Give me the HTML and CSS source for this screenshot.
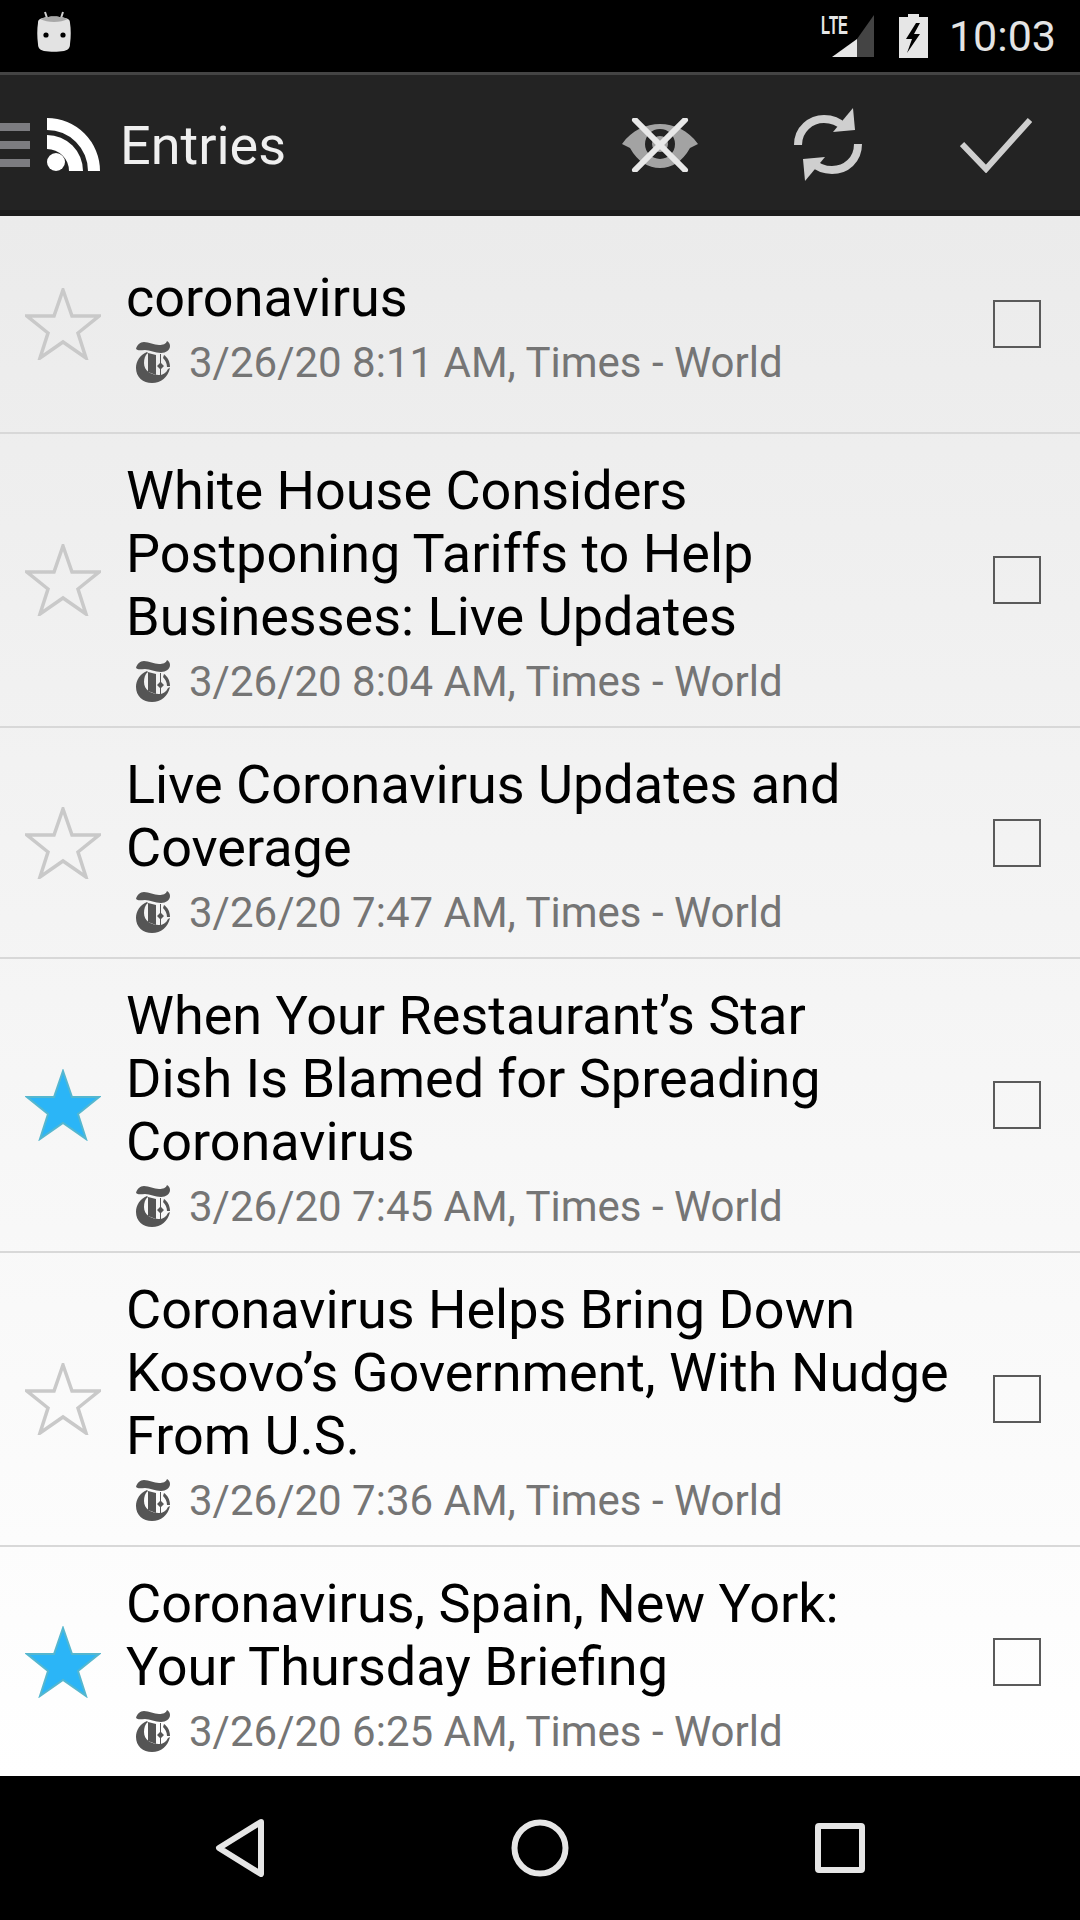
FILE: index.html
```html
<!DOCTYPE html>
<html lang="en">
<head>
    <meta charset="UTF-8">
    <meta name="viewport" content="width=device-width, initial-scale=1.0">
    <link rel="stylesheet" href="styles.css">
    <title>Entries</title>
</head>

<body>
    <svg class="defs" width="0" height="0">
        <symbol id="star" viewBox="0 0 76 72">
            <polygon points="38,2 47,28 74,28 53,45 61,70 38,54 15,70 23,45 2,28 29,28"/>
        </symbol>
        <symbol id="nyt" viewBox="0 0 34 42">
            <path d="M0 8C1 4 4 1 8 1c5 0 10 3 15 3 4 0 7-1 8-4 2 1 3 3 3 5 0 4-4 7-9 7-6 0-11-3-16-3-4 0-7 1-9-1z"/>
            <path d="M11 11C4 14 0 20 0 27c0 9 7 15 16 15 9 0 16-6 18-15l-2 1c-2 4-5 6-9 6-8 0-15-4-15-12 0-4 1-8 4-10z"/>
            <path d="M12 12l8 2v20l-8-3z"/>
            <path d="M24 13h1v9l3 3-3 3v7h-1v-7l-3-3 3-3z"/>
            <path d="M28 14c3 2 6 6 6 12h-3c0-4-2-7-4-9z"/>
        </symbol>
    </svg>

    <div class="statusbar">
        <svg class="droid" width="36" height="42" viewBox="0 0 36 42">
            <path class="droid-ant" d="M9 1l3 9M27 1l-3 9"/>
            <path class="droid-head" d="M7 7c7-2 15-2 22 0 3 1 5 1 5 5 1 6 1 14 0 21 0 4-2 6-6 7-6 1-14 1-20 0-4-1-6-3-6-7-1-7-1-15 0-21 0-4 2-4 5-5z"/>
            <path class="droid-top" d="M7 7c7-2 15-2 22 0l3 1c-8 4-20 4-28 0z"/>
            <circle class="droid-eye" cx="10" cy="24" r="2.6"/>
            <circle class="droid-eye" cx="27" cy="24" r="2.6"/>
        </svg>
        <div class="status-right">
            <svg class="signal" width="54" height="56" viewBox="0 -6 54 56">
                <text class="lte" x="0" y="20" textLength="27" lengthAdjust="spacingAndGlyphs">LTE</text>
                <polygon class="sig-off" points="36,25 53,1 53,43 36,43"/>
                <polygon class="sig-on" points="11,43 36,25 36,43"/>
            </svg>
            <svg class="battery" width="29" height="44" viewBox="0 0 29 44">
                <path class="batt-body" d="M9 0h11v3h9v41H0V3h9z"/>
                <path class="batt-bolt" d="M17 9L7 25h6l-5 14 13-19h-6l6-11z"/>
            </svg>
            <span class="clock">10:03</span>
        </div>
    </div>

    <header class="actionbar">
        <div class="drawer">
            <span></span>
            <span></span>
            <span></span>
        </div>
        <svg class="rss" width="54" height="54" viewBox="0 0 54 54">
            <circle cx="9" cy="44" r="9"/>
            <path d="M0 17A36 36 0 0 1 36 53H22A22 22 0 0 0 0 31z"/>
            <path d="M0 0A53 53 0 0 1 53 53H41A41 41 0 0 0 0 12z"/>
        </svg>
        <h1 class="screen-title">Entries</h1>
        <div class="actions">
            <div class="action">
                <svg width="76" height="54" viewBox="0 0 76 54">
                    <path class="eye" d="M0 26C10 12 24 6 38 6s28 6 38 20l-8 4C60 44 50 50 38 50S16 44 8 30z"/>
                    <circle class="eye-hole" cx="38" cy="26" r="15"/>
                    <circle class="eye" cx="38" cy="26" r="8"/>
                    <path class="eye-x" d="M13 2l50 50M63 2L13 52"/>
                </svg>
            </div>
            <div class="action">
                <svg width="68" height="74" viewBox="0 0 68 74">
                    <path class="sync" d="M4 37C4 21 17 11 30 11c9 0 15 3 20 8M64 36c0 16-12 26-26 26-9 0-15-3-20-8"/>
                    <polygon class="sync-head" points="59,0 61,22 39,24"/>
                    <polygon class="sync-head" points="11,73 9,51 31,49"/>
                </svg>
            </div>
            <div class="action">
                <svg width="72" height="56" viewBox="0 0 72 56">
                    <path class="check" d="M2 27l24 25L70 3"/>
                </svg>
            </div>
        </div>
    </header>
    <div class="bar-edge"></div>

    <main class="entries">
        <article class="entry">
            <svg class="star"><use href="#star"/></svg>
            <div class="entry-body">
                <h2 class="entry-title">coronavirus</h2>
                <p class="entry-meta"><svg class="nyt"><use href="#nyt"/></svg>3/26/20 8:11 AM, Times - World</p>
            </div>
            <span class="tick"></span>
        </article>
        <article class="entry">
            <svg class="star"><use href="#star"/></svg>
            <div class="entry-body">
                <h2 class="entry-title">White House Considers<br>Postponing Tariffs to Help<br>Businesses: Live Updates</h2>
                <p class="entry-meta"><svg class="nyt"><use href="#nyt"/></svg>3/26/20 8:04 AM, Times - World</p>
            </div>
            <span class="tick"></span>
        </article>
        <article class="entry">
            <svg class="star"><use href="#star"/></svg>
            <div class="entry-body">
                <h2 class="entry-title">Live Coronavirus Updates and<br>Coverage</h2>
                <p class="entry-meta"><svg class="nyt"><use href="#nyt"/></svg>3/26/20 7:47 AM, Times - World</p>
            </div>
            <span class="tick"></span>
        </article>
        <article class="entry">
            <svg class="star starred"><use href="#star"/></svg>
            <div class="entry-body">
                <h2 class="entry-title">When Your Restaurant’s Star<br>Dish Is Blamed for Spreading<br>Coronavirus</h2>
                <p class="entry-meta"><svg class="nyt"><use href="#nyt"/></svg>3/26/20 7:45 AM, Times - World</p>
            </div>
            <span class="tick"></span>
        </article>
        <article class="entry">
            <svg class="star"><use href="#star"/></svg>
            <div class="entry-body">
                <h2 class="entry-title">Coronavirus Helps Bring Down<br>Kosovo’s Government, With Nudge<br>From U.S.</h2>
                <p class="entry-meta"><svg class="nyt"><use href="#nyt"/></svg>3/26/20 7:36 AM, Times - World</p>
            </div>
            <span class="tick"></span>
        </article>
        <article class="entry">
            <svg class="star starred"><use href="#star"/></svg>
            <div class="entry-body">
                <h2 class="entry-title">Coronavirus, Spain, New York:<br>Your Thursday Briefing</h2>
                <p class="entry-meta"><svg class="nyt"><use href="#nyt"/></svg>3/26/20 6:25 AM, Times - World</p>
            </div>
            <span class="tick"></span>
        </article>
    </main>

    <nav class="navbar">
        <svg width="50" height="58" viewBox="0 0 50 58">
            <path class="nav-icon" d="M46 3L4 29l42 26z"/>
        </svg>
        <svg width="58" height="58" viewBox="0 0 58 58">
            <circle class="nav-icon" cx="29" cy="29" r="25.5"/>
        </svg>
        <svg width="50" height="50" viewBox="0 0 50 50">
            <rect class="nav-icon" x="3" y="3" width="44" height="44" rx="1"/>
        </svg>
    </nav>
</body>
</html>
```

FILE: styles.css
```css
* {
    box-sizing: border-box;
}

body {
    margin: 0;
    width: 1080px;
    height: 1920px;
    display: flex;
    flex-direction: column;
    background: #000;
    font-family: Roboto, sans-serif;
}

.defs {
    display: block;
    height: 0;
}

/* status bar */
.statusbar {
    height: 72px;
    flex: none;
    display: flex;
    align-items: center;
    justify-content: space-between;
    padding: 0 24px 0 36px;
    background: #000;
}

.droid {
    margin-top: -9px;
}

.droid-ant {
    fill: none;
    stroke: #cfcfcf;
    stroke-width: 2;
}

.droid-head {
    fill: #e3e3e3;
}

.droid-top {
    fill: #a8a8a8;
}

.droid-eye {
    fill: #000;
}

.status-right {
    display: flex;
    align-items: center;
}

.lte {
    font-family: "Liberation Sans", sans-serif;
    font-size: 25px;
    font-weight: 700;
    fill: #e6e6e6;
}

.sig-on {
    fill: #e6e6e6;
}

.sig-off {
    fill: #444;
}

.battery {
    margin-left: 24px;
}

.batt-body {
    fill: #e6e6e6;
}

.batt-bolt {
    fill: #000;
}

.clock {
    margin-left: 21px;
    font-size: 43px;
    color: #e4e4e4;
}

/* action bar */
.actionbar {
    height: 138px;
    flex: none;
    display: flex;
    align-items: center;
    padding-top: 4px;
    border-top: 3px solid #444;
    background: #232323;
}

.drawer {
    width: 30px;
    display: flex;
    flex-direction: column;
    gap: 10px;
}

.drawer span {
    height: 8px;
    background: #7c7c80;
}

.rss {
    margin-left: 17px;
    fill: #fff;
}

.screen-title {
    margin: 2px 0 0 19px;
    font-size: 54px;
    font-weight: 400;
    color: #efefef;
}

.actions {
    margin-left: auto;
    display: flex;
}

.action {
    width: 168px;
    display: flex;
    justify-content: center;
    align-items: center;
}

.eye {
    fill: #a3a3a3;
}

.eye-hole {
    fill: #232323;
}

.eye-x {
    fill: none;
    stroke: #e8e8e8;
    stroke-width: 6;
    stroke-linecap: round;
}

.sync {
    fill: none;
    stroke: #cfcfcf;
    stroke-width: 8;
}

.sync-head {
    fill: #cfcfcf;
}

.check {
    fill: none;
    stroke: #cfcfcf;
    stroke-width: 6;
}

.bar-edge {
    height: 6px;
    flex: none;
    background: #1a1a1a;
}

/* list */
.entries {
    flex: 1;
    display: flex;
    flex-direction: column;
    background: linear-gradient(#ebebeb, #fff);
}

.entry {
    min-height: 218px;
    display: flex;
    align-items: center;
    border-bottom: 2px solid #d8d8d8;
}

.entry:last-child {
    border-bottom: none;
}

.star {
    width: 76px;
    height: 72px;
    margin-left: 25px;
    flex: none;
    fill: none;
    stroke: #c9c9c9;
    stroke-width: 3.5;
}

.star.starred {
    fill: #2bb5f7;
    stroke: #55b7cf;
    stroke-width: 2;
}

.entry-body {
    flex: 1;
    margin-left: 25px;
    padding: 25px 0 20px;
}

.entry-title {
    margin: 0;
    font-size: 54px;
    line-height: 63px;
    font-weight: 400;
    color: #000;
}

.entry-meta {
    margin: 8px 0 0;
    display: flex;
    align-items: center;
    height: 50px;
    font-size: 42px;
    color: #757575;
}

.nyt {
    width: 34px;
    height: 42px;
    margin: 0 19px 0 10px;
    fill: #555;
}

.tick {
    width: 48px;
    height: 48px;
    margin-right: 39px;
    flex: none;
    border: 2px solid #5a5a5a;
}

/* nav buttons */
.navbar {
    height: 144px;
    flex: none;
    display: grid;
    grid-template-columns: repeat(3, 1fr);
    justify-items: center;
    align-items: center;
    padding: 0 90px;
    background: #000;
}

.nav-icon {
    fill: none;
    stroke: #e6e6e6;
    stroke-width: 6;
    stroke-linejoin: round;
}
```
